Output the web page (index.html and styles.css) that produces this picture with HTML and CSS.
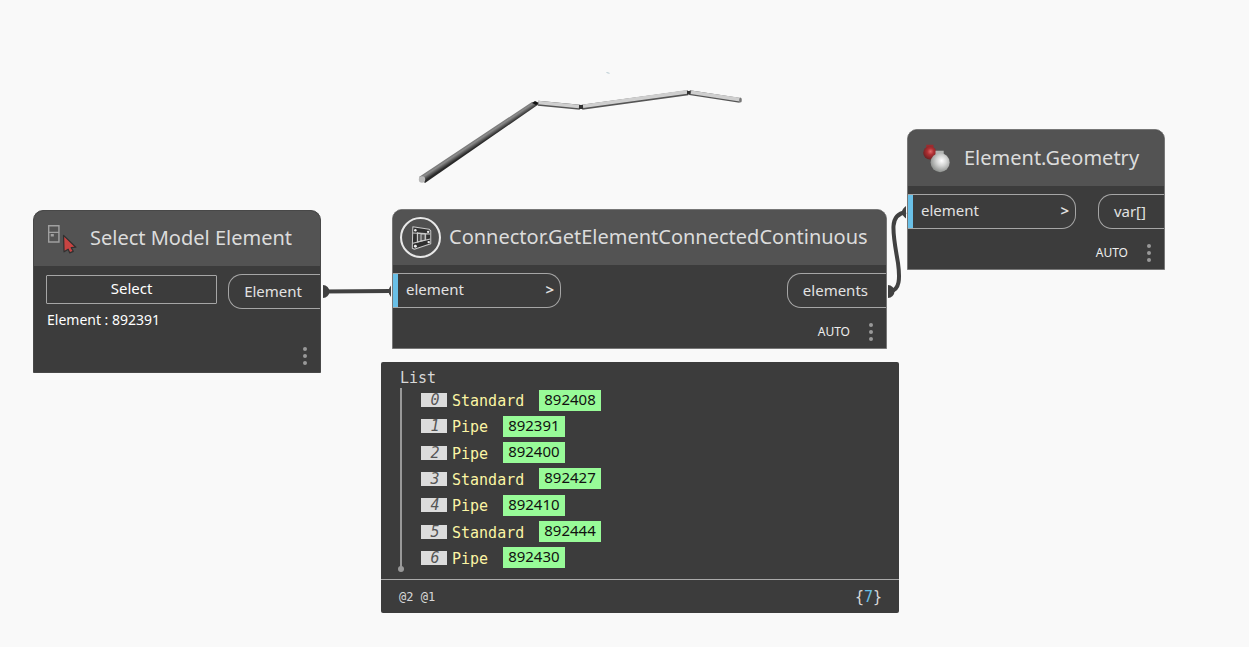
FILE: index.html
```html
<!DOCTYPE html>
<html lang="en">
<head>
<meta charset="utf-8">
<title>Element graph</title>
<link rel="stylesheet" href="styles.css">
</head>
<body>
<main class="canvas">
  <svg class="layer" aria-hidden="true">
    <defs>
      <linearGradient id="dark" gradientUnits="userSpaceOnUse" x1="476" y1="138" x2="480" y2="144">
        <stop offset="0" stop-color="#6d6d6d"/><stop offset=".4" stop-color="#8b8b8b"/><stop offset="1" stop-color="#292929"/>
      </linearGradient>
    </defs>
    <path d="M419 177 L532 102 L539 104 L425 183Z" fill="url(#dark)"/>
    <ellipse cx="422" cy="179.5" rx="3.2" ry="3.3" fill="#b8b8b8"/>
    <g stroke-linecap="butt">
      <path d="M538 103.3 L580 107.3 M582 107.3 L688 92.8 M689.500 92.6 L740 100.400" stroke="#555" stroke-width="5"/>
      <path d="M538 102.500 L579 106.500 M583 106.300 L687 91.900 M691 92.300 L740 99.600" stroke="#cfcfcf" stroke-width="3.600"/>
    </g>
    <path d="M532 103 L535 101 L539 103 L536 105Z" fill="#111"/>
    <path d="M579 105h4v4h-4z M687 91h3v3.500h-3z" fill="#333"/>
    <ellipse cx="740.500" cy="100" rx="1.300" ry="2.600" fill="#777"/>
    <path d="M606.500 72.500l3 .8" stroke="#b7cbd2"/>
  </svg>

  <section class="node select-node">
    <header class="head">
      <svg class="icon" viewBox="0 0 40 40" aria-hidden="true">
        <g fill="none" stroke="#a0a0a0" stroke-width="1.400"><path d="M7.500 7.500h10v16h-10z M7.500 14h10"/></g>
        <path d="M9.500 15.500h3v2.500h-3z" fill="#a0a0a0"/>
        <path d="M22 17 L34 28.500 L29.500 29 L31.500 32.500 L28 34 L26.500 30.500 L22.500 33Z" fill="#c94442" stroke="#303030" stroke-width="1.200" stroke-linejoin="round"/>
      </svg>
      <h2>Select Model Element</h2>
    </header>
    <div class="ports">
      <button class="select-button" type="button">Select</button>
      <div class="port out">Element</div>
    </div>
    <p class="selection">Element : 892391</p>
    <footer class="foot"><button class="more" type="button" aria-label="Node options"><i></i><i></i><i></i></button></footer>
  </section>

  <section class="node connector-node">
    <header class="head">
      <svg class="icon" viewBox="0 0 40 40" aria-hidden="true">
        <circle cx="20" cy="20" r="19" fill="#505050" stroke="#e8e8e8" stroke-width="2"/>
        <g fill="none" stroke="#c9c9c9" stroke-linejoin="round">
          <path d="M12.500 9.500 L28.500 12 L30 13.500 V26 L14 31.500 L12 30.500Z" fill="#303030"/>
          <path d="M17 15.500 L24.500 16 V22.500 L17 24.500Z" fill="#505050"/>
          <path d="M20.500 15.800V23.500 M12.500 15.500 L29.500 16.500 M12.500 25.500 L29.500 21.500 M17 15 V24.500 M25 16 V22.500"/>
        </g>
        <g fill="#eee"><circle cx="15" cy="13" r="1.200"/><circle cx="27.500" cy="14.500" r="1.200"/><circle cx="15" cy="28.500" r="1.400"/><circle cx="28" cy="24.500" r="1.200"/></g>
      </svg>
      <h2>Connector.GetElementConnectedContinuous</h2>
    </header>
    <div class="ports">
      <div class="port in"><span>element</span><button class="level" type="button" aria-label="Port options">&gt;</button></div>
      <div class="port out">elements</div>
    </div>
    <footer class="foot"><span>AUTO</span><button class="more" type="button" aria-label="Node options"><i></i><i></i><i></i></button></footer>
  </section>

  <section class="node geometry-node">
    <header class="head">
      <svg class="icon" viewBox="0 0 40 40" aria-hidden="true">
        <defs>
          <radialGradient id="red" cx=".55" cy=".4" r=".6"><stop offset="0" stop-color="#e06a6a"/><stop offset=".4" stop-color="#b03033"/><stop offset="1" stop-color="#6c2022"/></radialGradient>
          <radialGradient id="white" cx=".58" cy=".4" r=".65"><stop offset="0" stop-color="#fff"/><stop offset=".4" stop-color="#d5d6d5"/><stop offset="1" stop-color="#858885"/></radialGradient>
        </defs>
        <path d="M11 6.500h7v6h-7z" fill="#9c2c2f"/><circle cx="14.500" cy="14.500" r="6.500" fill="url(#red)"/>
        <path d="M20 12.500h8v6h-8z" fill="#b4b6b4"/><circle cx="24.500" cy="24" r="9.300" fill="url(#white)"/>
      </svg>
      <h2>Element.Geometry</h2>
    </header>
    <div class="ports">
      <div class="port in"><span>element</span><button class="level" type="button" aria-label="Port options">&gt;</button></div>
      <div class="port out">var[]</div>
    </div>
    <footer class="foot"><span>AUTO</span><button class="more" type="button" aria-label="Node options"><i></i><i></i><i></i></button></footer>
  </section>

  <section class="preview">
    <div class="tree">
      <div class="root">List</div>
      <ol class="items">
        <li><em>0</em><span>Standard</span><a href="#892408">892408</a></li>
        <li><em>1</em><span>Pipe</span><a href="#892391">892391</a></li>
        <li><em>2</em><span>Pipe</span><a href="#892400">892400</a></li>
        <li><em>3</em><span>Standard</span><a href="#892427">892427</a></li>
        <li><em>4</em><span>Pipe</span><a href="#892410">892410</a></li>
        <li><em>5</em><span>Standard</span><a href="#892444">892444</a></li>
        <li><em>6</em><span>Pipe</span><a href="#892430">892430</a></li>
      </ol>
    </div>
    <footer class="summary"><span class="levels">@2 @1</span><span>{<b>7</b>}</span></footer>
  </section>

  <svg class="layer" aria-hidden="true">
    <g fill="none" stroke="#414141" stroke-width="4">
      <path d="M324 291.500 L391 291"/>
      <path d="M890 291.500 C900 290 900 278 898 263 C895 245 893 236 893.500 226 C894 216 900 213 906 212"/>
    </g>
    <g fill="#414141">
      <path d="M323 285 A6.500 6.500 0 0 1 323 298Z"/>
      <path d="M888 285 A6.500 6.500 0 0 1 888 298Z"/>
      <path d="M391 285.500 Q386 291 391 297Z M906 206 Q898 212 906 218.500Z"/>
    </g>
  </svg>
</main>
</body>
</html>
```
FILE: styles.css
```css
* { box-sizing: border-box; }

body {
  margin: 0;
  background: #f9f9f9;
  color: #e2e2e2;
  font-family: "Noto Sans", sans-serif;
  font-size: 15px;
  line-height: 20px;
}

button {
  padding: 0;
  border: 0;
  background: none;
  color: inherit;
  font: inherit;
}

.canvas {
  position: relative;
  min-height: 100vh;
  overflow: hidden;
}

.layer {
  position: absolute;
  inset: 0;
  width: 100%;
  height: 100%;
  pointer-events: none;
}

.node {
  position: absolute;
  border: 1px solid #777;
  border-radius: 10px 10px 0 0;
  background: #3c3c3c;
  overflow: hidden;
}

.select-node { left: 33px; top: 210px; width: 288px; border-color: #484848; }
.connector-node { left: 392px; top: 209px; width: 495px; }
.geometry-node { left: 907px; top: 129px; width: 258px; }

.head {
  display: flex;
  align-items: center;
  gap: 8px;
  height: 55px;
  padding-left: 7px;
  background: #535353;
}

.geometry-node .head { height: 56px; }

.icon {
  flex: none;
  width: 41px;
  height: 41px;
}

h2 {
  margin: 0;
  padding-bottom: 1px;
  color: #dcdcdc;
  font-size: 20px;
  font-weight: 400;
  line-height: 28px;
  white-space: nowrap;
}

.ports {
  display: flex;
  justify-content: space-between;
  padding-top: 8px;
}

.port {
  display: flex;
  align-items: center;
  height: 35px;
  border: 1px solid #a6a6a6;
}

.in {
  justify-content: space-between;
  width: 168px;
  padding: 0 6px 3px 13px;
  border-left: 0;
  border-radius: 0 14px 14px 0;
  box-shadow: inset 5px 0 #6ac0e7;
}

.level { font-weight: 600; }

.out {
  padding: 0 18px 2px 15px;
  border-right: 0;
  border-radius: 14px 0 0 14px;
}

.select-button {
  align-self: flex-start;
  flex: 1;
  height: 29px;
  margin: 1px 11px 0 12px;
  padding-bottom: 4px;
  border: 1px solid #a6a6a6;
  border-radius: 1px;
  color: #fff;
}

.selection {
  margin: 0;
  padding: 1px 0 0 13px;
  color: #fff;
  font-size: 14px;
}

.foot {
  display: flex;
  align-items: center;
  justify-content: flex-end;
  gap: 19px;
  height: 40px;
  padding: 8px 13px 0 0;
  color: #eee;
  font-size: 12px;
}

.select-node .foot {
  height: 42px;
  padding-top: 10px;
}

.more {
  display: grid;
  gap: 3px;
}

.more i {
  width: 4px;
  height: 4px;
  border-radius: 2px;
  background: #999;
}

.preview {
  position: absolute;
  left: 381px;
  top: 362px;
  width: 518px;
  border-radius: 2px;
  background: #3c3c3c;
  color: #d8d8d8;
  font-family: "DejaVu Sans Mono", monospace;
}

.tree { padding: 6px 19px 9px; }

.items {
  position: relative;
  display: flex;
  flex-direction: column;
  justify-content: space-between;
  min-height: 182px;
  margin: 0;
  padding: 0 0 0 19px;
  border-left: 2px solid #999;
  list-style: none;
}

.items::after {
  content: "";
  position: absolute;
  left: -4px;
  bottom: -2px;
  width: 6px;
  height: 6px;
  border-radius: 3px;
  background: #999;
}

.items li {
  display: flex;
  align-items: center;
  height: 24px;
}

.items em {
  width: 26px;
  height: 14px;
  margin-right: 5px;
  padding-left: 2px;
  background: #dcdcdc;
  color: #555;
  line-height: 14px;
  text-align: center;
}

.items span {
  margin-right: 15px;
  padding-top: 2px;
  color: #fbf5a4;
}

.items a {
  height: 21px;
  padding: 0 5px;
  background: #98fb98;
  color: #111;
  font-family: "Noto Sans", sans-serif;
  line-height: 18px;
  text-decoration: none;
}

.summary {
  display: flex;
  align-items: center;
  justify-content: space-between;
  height: 34px;
  padding: 0 17px 0 18px;
  border-top: 1px solid #aaa;
}

.levels { font-size: 12px; }

.summary b {
  color: #6ac0e7;
  font-weight: 400;
}
```
